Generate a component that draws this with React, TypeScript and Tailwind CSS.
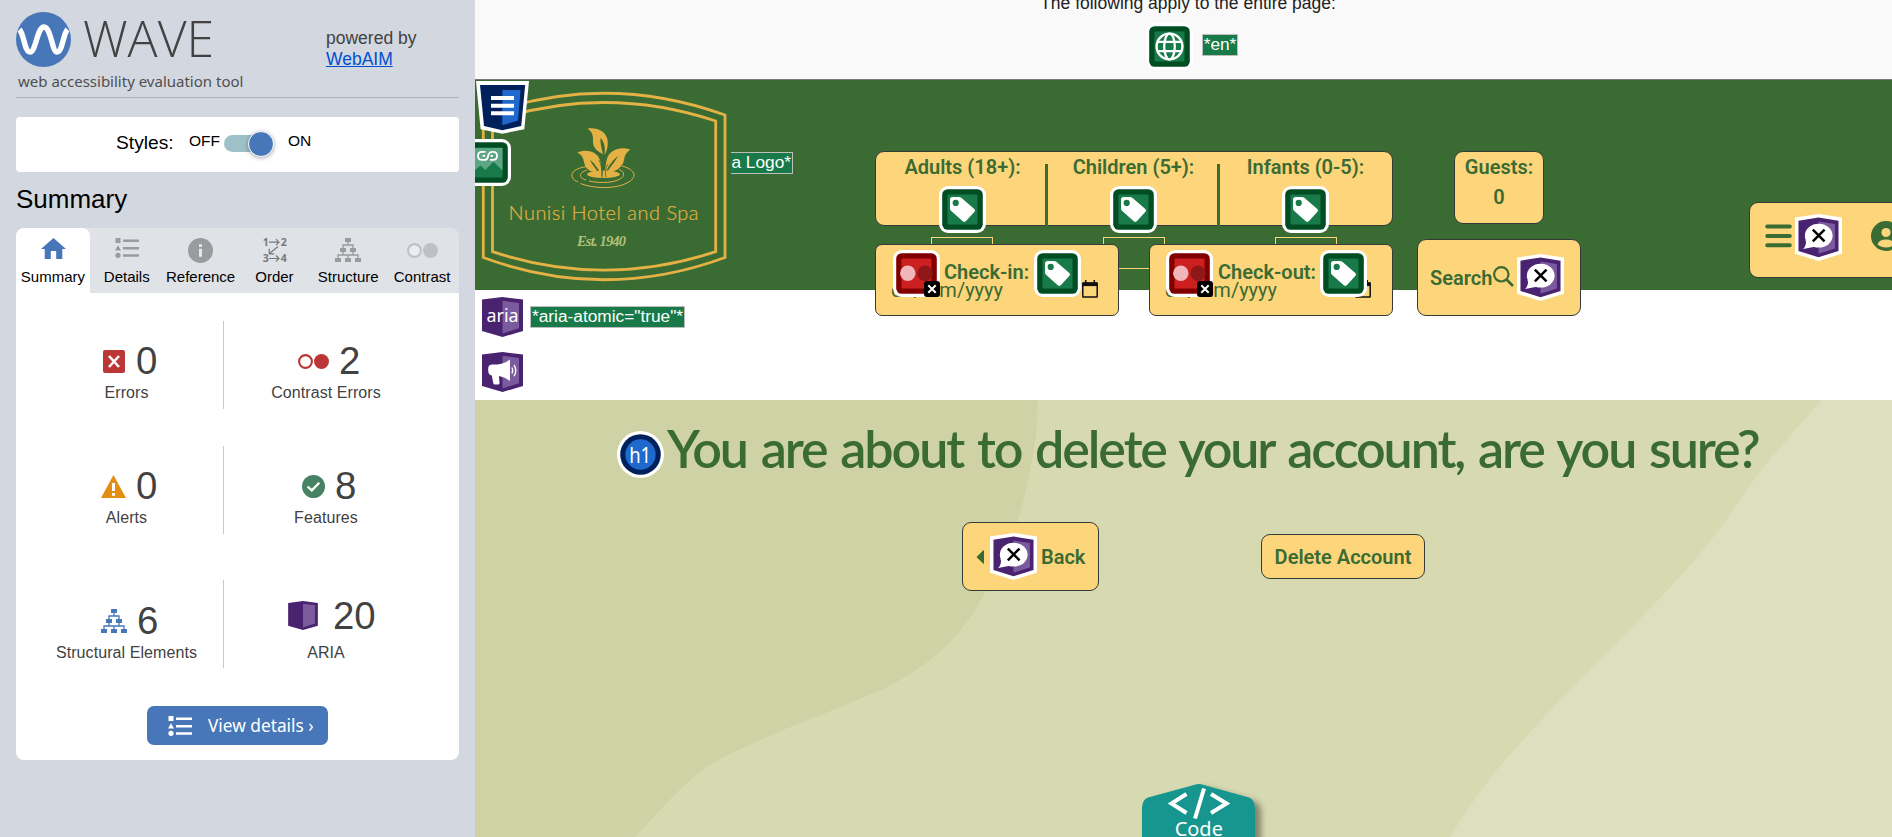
import React from "react";

type Pt = [number, number];

/* Smooth path through a list of points (Catmull-Rom to Bezier). */
function smooth(points: Pt[]): string {
  let d = `M${points[0][0]} ${points[0][1]}`;
  for (let i = 0; i < points.length - 1; i++) {
    const p0 = points[Math.max(i - 1, 0)];
    const p1 = points[i];
    const p2 = points[i + 1];
    const p3 = points[Math.min(i + 2, points.length - 1)];
    d += ` C${p1[0] + (p2[0] - p0[0]) / 6} ${p1[1] + (p2[1] - p0[1]) / 6} ${p2[0] - (p3[0] - p1[0]) / 6} ${
      p2[1] - (p3[1] - p1[1]) / 6
    } ${p2[0]} ${p2[1]}`;
  }
  return d;
}

/* ---------- badges that the evaluation tool injects ---------- */

function GreenTile({ children }: { children: React.ReactNode }) {
  return (
    <svg className="block h-[47px] w-[47px] shrink-0" viewBox="0 0 47 47">
      <rect width="47" height="47" rx="9" fill="#fff" />
      <rect x="3.2" y="3.2" width="40.6" height="40.6" rx="5.5" fill="#004d24" />
      <rect x="8.5" y="8.5" width="30" height="30" rx="1" fill="#177a48" />
      {children}
    </svg>
  );
}

function TagBadge() {
  return (
    <GreenTile>
      <path
        d="M11 13.6Q11 11 13.6 11H19.5Q21.3 11 22.6 12L35.3 22.9Q36.8 24.3 35.5 25.8L27 35.1Q25.4 36.6 23.8 35.3L12 24.8Q11 23.8 11 22.4Z"
        fill="#fff"
      />
      <circle cx="16.7" cy="16.9" r="3.1" fill="#177a48" />
    </GreenTile>
  );
}

function GlobeBadge() {
  return (
    <GreenTile>
      <g fill="none" stroke="#fff" strokeWidth="2.3">
        <circle cx="23.5" cy="23.5" r="12.9" strokeWidth="2.4" />
        <ellipse cx="23.5" cy="23.5" rx="5.3" ry="12.9" />
        <path d="M11 18.8H36M11 28.2H36" />
      </g>
    </GreenTile>
  );
}

function ContrastBadge() {
  return (
    <svg className="block h-[47px] w-[47px] shrink-0" viewBox="0 0 47 47">
      <rect width="47" height="47" rx="9" fill="#fff" />
      <rect x="3.2" y="3.2" width="40.6" height="40.6" rx="5.5" fill="#800000" />
      <rect x="8.5" y="8.5" width="30" height="30" rx="1" fill="#cc2020" />
      <circle cx="14.8" cy="23.3" r="7.7" fill="#f1b6b9" />
      <circle cx="32" cy="23.3" r="7.7" fill="#8f1717" />
      <rect x="31" y="31" width="16" height="16" rx="3" fill="#000" />
      <path d="M35.3 35.3L42.7 42.7M42.7 35.3L35.3 42.7" stroke="#fff" strokeWidth="2" />
    </svg>
  );
}

function LabelBadge() {
  return (
    <svg className="block h-[47px] w-[47px] shrink-0" viewBox="0 0 47.4 47.4">
      <path d="M0 3.5L23.7 0L47.4 3.5V40L23.7 47.4L0 40Z" fill="#fff" />
      <path d="M3.5 6.7L23.7 3.6L43.9 6.7V37.3L23.7 43.6L3.5 37.3Z" fill="#49236f" />
      <path d="M23.7 7.6L40.2 10V34.8L23.7 40Z" fill="#7b5a9d" />
      <ellipse cx="23.9" cy="21.9" rx="14" ry="12" fill="#fff" />
      <path d="M10.5 26Q12.5 30.5 8.2 35.4L20 33Z" fill="#fff" />
      <path d="M18 15.7L29.8 27.5M29.8 15.7L18 27.5" stroke="#000" strokeWidth="2.5" />
    </svg>
  );
}

function AriaShape({ children, className }: { children?: React.ReactNode; className: string }) {
  return (
    <svg className={className} viewBox="0 0 41 40">
      <path d="M0 2.6L20.5 0L41 2.6V34L20.5 40L0 34Z" fill="#49236f" />
      <path d="M20.5 3.8L37 6V31.2L20.5 36.4Z" fill="#7b5a9d" />
      {children}
    </svg>
  );
}

function HeaderBadge() {
  return (
    <svg className="block h-[53px] w-[53px]" viewBox="0 0 53 53">
      <path d="M0 0H53L48.3 48.3L26.3 52.7L4.6 48.3Z" fill="#fff" />
      <path d="M4 4H49.2L45.2 45L26.3 49.2L8 45Z" fill="#00205b" />
      <path d="M26.3 9H44.5L42 39.6L26.3 44.2Z" fill="#1f69cc" />
      <path d="M15 17H38M15 24.7H38M15 32.3H38" stroke="#fff" strokeWidth="4" />
    </svg>
  );
}

function LinkedImageBadge() {
  return (
    <svg className="block h-[47px] w-[36px]" viewBox="11 0 36 47">
      <rect width="47" height="47" rx="9" fill="#fff" />
      <rect x="3.2" y="3.2" width="40.6" height="40.6" rx="5.5" fill="#004d24" />
      <rect x="8.5" y="8.5" width="30" height="30" rx="1" fill="#177a48" />
      <path d="M9 9H38.5V31.5L29.5 22.7L21.3 31L16.5 26.5L9 32.5Z" fill="#5ea583" />
      <g fill="none" stroke="#fff" strokeWidth="1.8">
        <path d="M21.5 12.8H18Q14 12.8 14 16.8Q14 20.9 18 20.9H20Q23.5 20.9 24 17.500Q24.500 12.800 28.500 12.800" />
        <path d="M28.500 12.800H29.200Q33 12.800 33 16.800Q33 20.900 29.200 20.900H26M18.500 16.800H21.200M26.500 16.800H29" />
      </g>
    </svg>
  );
}

function Note({ children }: { children: React.ReactNode }) {
  return (
    <span className="block h-[22px] border border-[#bdbdbd] bg-[#177a48] px-px font-['Liberation_Sans',sans-serif] text-[17.3px] leading-[18px] whitespace-nowrap text-white">
      {children}
    </span>
  );
}

/* ---------- small icons of the sidebar ---------- */

function ListIcon({ className }: { className: string }) {
  return (
    <svg className={className} viewBox="0 0 24 20" fill="currentColor">
      <rect x="0.5" y="0" width="5" height="5" />
      <path d="M3 7.3L6 12.6H0Z" />
      <circle cx="3" cy="17.3" r="2.6" />
      <path d="M8 1.4H24V4H8ZM8 8.9H24V11.5H8ZM8 16.2H24V18.8H8Z" />
    </svg>
  );
}

function TreeIcon({ className }: { className: string }) {
  return (
    <svg className={className} viewBox="0 0 26 24" fill="currentColor">
      <path d="M10 0H16V4H10ZM5 10H11V14H5ZM15 10H21V14H15ZM0 20H6V24H0ZM10 20H16V24H10ZM20 20H26V24H20Z" />
      <path
        d="M13 4V7M8 10V7H18V10M8 14V17M18 14V17M3 20V17H23V20M13 17V20"
        fill="none"
        stroke="currentColor"
        strokeWidth="1.3"
      />
    </svg>
  );
}

function DotsIcon({ className }: { className: string }) {
  return (
    <svg className={className} viewBox="0 0 31 15">
      <circle cx="7.5" cy="7.5" r="6.4" fill="#fff" fillOpacity="0.4" stroke="currentColor" strokeWidth="2.1" />
      <circle cx="23.5" cy="7.5" r="7.5" fill="currentColor" />
    </svg>
  );
}

const tabs = [
  {
    name: "Summary",
    icon: (
      <svg className="mt-px ml-[1px] h-[21px] w-[25px] text-[#4777b8]" viewBox="0 0 25 21" fill="currentColor">
        <path d="M12.5 0L25 11H21.3V21H15.2V13.5Q15.2 13 14.7 13H10.3Q9.8 13 9.8 13.5V21H3.7V11H0Z" />
      </svg>
    ),
  },
  { name: "Details", icon: <ListIcon className="h-5 w-6 text-[#999b9d]" /> },
  {
    name: "Reference",
    icon: (
      <svg className="h-[25px] w-[25px]" viewBox="0 0 25 25">
        <circle cx="12.5" cy="12.5" r="12.5" fill="#999b9d" />
        <path d="M11 6.2H14V9H11ZM11 10.8H14V18.8H11Z" fill="#e6e8eb" />
      </svg>
    ),
  },
  {
    name: "Order",
    icon: (
      <svg className="ml-[2px] h-[26px] w-6 text-[#77797b]" viewBox="0 0 24 26">
        <g fontFamily="Open Sans, sans-serif" fontSize="10.5" fontWeight="700" fill="currentColor">
          <text x="-0.3" y="8">1</text>
          <text x="17.8" y="8">2</text>
          <text x="-0.3" y="24.3">3</text>
          <text x="17.8" y="24.3">4</text>
        </g>
        <path
          d="M6 4.2H16M13 1.2L16 4.2L13 7.2M6 20.5H16M13 17.5L16 20.5L13 23.5M15 8.5L6.5 15.5M6.3 10.8V15.8H11.2"
          fill="none"
          stroke="currentColor"
          strokeWidth="1.2"
        />
      </svg>
    ),
  },
  { name: "Structure", icon: <TreeIcon className="h-6 w-[26px] text-[#999b9d]" /> },
  { name: "Contrast", icon: <DotsIcon className="mt-[5px] h-[15px] w-[31px] text-[#bdc0c4]" /> },
];

const stats = [
  {
    label: "Errors",
    value: "0",
    row: "gap-[11px] pl-[87px]",
    icon: (
      <svg className="mt-px h-[23px] w-[22px]" viewBox="0 0 22 23">
        <rect width="22" height="23" rx="2" fill="#bb3636" />
        <path d="M6 6L16 17M16 6L6 17" stroke="#fff" strokeWidth="2.6" />
      </svg>
    ),
  },
  {
    label: "Contrast Errors",
    value: "2",
    row: "gap-[10px] pl-[74px]",
    icon: <DotsIcon className="mt-[2px] h-[15px] w-[31px] text-[#bb3636]" />,
  },
  {
    label: "Alerts",
    value: "0",
    row: "gap-[10px] pl-[85px]",
    icon: (
      <svg className="mt-[2px] h-[23px] w-[25px]" viewBox="0 0 25 23">
        <path d="M12.5 0L25 23H0Z" fill="#e38d13" />
        <path d="M11 8H14V16H11ZM11 18H14V20.8H11Z" fill="#fff" />
      </svg>
    ),
  },
  {
    label: "Features",
    value: "8",
    row: "gap-[10px] pl-[78px]",
    icon: (
      <svg className="mt-[2px] h-[23px] w-[23px]" viewBox="0 0 23 23">
        <circle cx="11.5" cy="11.5" r="11.5" fill="#478264" />
        <path d="M5.5 11.5L9.8 15.4L17.3 7.8" fill="none" stroke="#fff" strokeWidth="2.3" />
      </svg>
    ),
  },
  {
    label: "Structural Elements",
    value: "6",
    row: "gap-[10px] pl-[85px]",
    icon: <TreeIcon className="mt-px h-6 w-[26px] text-[#4777b8]" />,
  },
  {
    label: "ARIA",
    value: "20",
    row: "-mt-[5px] mb-[5px] gap-[15px] pl-[64px]",
    icon: <AriaShape className="h-[29px] w-[30px]" />,
  },
];

function Sidebar() {
  return (
    <aside className="h-[837px] w-[475px] shrink-0 bg-[#d3d7df] px-4 font-['Liberation_Sans',sans-serif] text-black">
      <header className="flex h-[98px] border-b border-[#b1b5b5] text-[#424242]">
        <div className="w-[310px] pt-3">
          <div className="flex h-[55px] gap-[12px]">
            <svg className="h-[55px] w-[55px]" viewBox="0 0 55 55">
              <circle cx="27.5" cy="27.5" r="27.5" fill="#4777b8" />
              <path
                d="M3.5 17.5C8 22 8.5 40 14 40C20 40 21 15 28 15C35 15 36 40 41 40C46.500 40 47 22 51.500 17.500"
                fill="none"
                stroke="#fff"
                strokeWidth="5.4"
              />
            </svg>
            <span className="font-['Open_Sans',sans-serif] text-[50px] leading-[53px] font-light">WAVE</span>
          </div>
          <div className="mt-[4px] pl-[2px] font-['Noto_Sans',sans-serif] text-[15px] leading-5 text-[#4f4f4f]">
            web accessibility evaluation tool
          </div>
        </div>
        <div className="pt-[28px] text-[17.5px] leading-[21px]">
          powered by
          <br />
          <a className="text-[#0050d0] underline">WebAIM</a>
        </div>
      </header>

      <div className="mt-[19px] flex h-[55px] rounded-[4px] bg-white pl-[100px]">
        <span className="w-[73px] pt-[14px] text-[19.2px] leading-6">Styles:</span>
        <span className="w-[35px] pt-[12px] text-[15.5px] leading-6">OFF</span>
        <span className="relative mt-[18px] h-[17px] w-[48px] rounded-full bg-[#9dc0c9]">
          <span className="absolute -top-[4px] right-[-2px] h-[26px] w-[26px] rounded-full border border-white bg-[#4777b8] shadow-[0_1px_4px_rgba(0,0,0,0.35)]" />
        </span>
        <span className="ml-[16px] pt-[12px] text-[15.5px] leading-6">ON</span>
      </div>

      <h2 className="h-[56px] pt-[12px] text-[26px] leading-[30px]">Summary</h2>

      <nav className="grid h-[65px] grid-cols-6 rounded-t-[8px] bg-[#dfe2e7] text-center text-[15px]">
        {tabs.map((tab, i) => (
          <div
            key={tab.name}
            className={
              i === 0
                ? "flex flex-col items-center rounded-t-[8px] bg-white pt-[9px]"
                : "flex flex-col items-center pt-[10px]"
            }
          >
            <span className="flex h-[27px] items-start">{tab.icon}</span>
            <span className={i === 0 ? "mt-[3px] leading-5" : "mt-[2px] leading-5"}>{tab.name}</span>
          </div>
        ))}
      </nav>

      <section className="h-[467px] rounded-b-[8px] bg-white pt-[28px] text-[#424242]">
        <div className="grid grid-cols-[208px_235px] gap-y-[37px]">
          {stats.map((s, i) => (
            <div
              key={s.label}
              className={
                (i % 2 === 0 ? "border-r border-[#c9c9c9] " : "") +
                (i > 3 ? "mt-[9px] h-[88px] pt-[20px]" : "h-[88px] pt-[19px]")
              }
            >
              <div className={"flex h-[41px] items-center " + s.row}>
                {s.icon}
                <span className="text-[38.4px] leading-[41px]">{s.value}</span>
              </div>
              <div
                className={
                  i % 2 === 0
                    ? "w-[221px] text-center text-[16px] leading-6 tracking-[0.08px]"
                    : "w-[204px] text-center text-[16px] leading-6 tracking-[0.08px]"
                }
              >
                {s.label}
              </div>
            </div>
          ))}
        </div>
        <button className="mx-auto mt-[38px] flex h-[39px] w-[181px] items-center rounded-[7px] bg-[#4777b8] pl-[21px] text-white">
          <ListIcon className="h-5 w-6" />
          <span className="ml-[16px] font-['Noto_Sans',sans-serif] text-[17.3px] whitespace-nowrap">View details ›</span>
        </button>
      </section>
    </aside>
  );
}

/* ---------- evaluated hotel page ---------- */

function HotelLogo() {
  return (
    <svg className="block h-[210px] w-[256px]" viewBox="0 0 256 210" fill="none">
      <g stroke="#e3b144" strokeWidth="2.8">
        <path d="M8.3 35Q129 -8.500 250 35V177.500Q129 222 8.300 177.500Z" />
        <path d="M17.500 41Q129 4 240.700 41V171.700Q129 208.500 17.500 171.700Z" />
      </g>
      <g fill="#e3b144">
        <path d="M112.500 48.600C122 47 131 51 132.600 60C133 66 132.500 70 129.500 75C131 66 128 60 125.500 58C125 64 127 69 128 74C119 70 117.500 65 118 59C118 54 116 51 112.500 48.600Z" />
        <path d="M102.300 72.500C111 69 121 71 124.500 79C127 85 126 90 126 94C123 88 119 83 115 80C117 85 121 88 123 93C113 92 110 87 109 82C108 77 106 74 102.300 72.500Z" />
        <path d="M155.300 69.500C144 66 134 71 132 79C130.500 84 130 89 130.500 93C133 86 138 80 143 76C140 82 134 88 132 93C142 92 148 86 149 80C149.500 75 152 72 155.300 69.500Z" />
        <ellipse cx="128.500" cy="94.300" rx="16.500" ry="3.700" />
      </g>
      <path
        d="M128 74C127 82 128 88 127 98M124 80C127 86 127 92 126.500 96M133 84C130 89 130 93 131 97"
        stroke="#3a6b33"
        strokeWidth="0.8"
      />
      <g stroke="#e3b144" strokeWidth="1">
        <path d="M112 86.500C101 88 96 92 97 96.500C98 100 101 101 103 102" />
        <path d="M105.500 103.500C119 109 141 109 152 103C162 98 162 90 147 86" />
        <path d="M112 90C103 93 104 98 111 100M114 101C128 104 140 102 145 99C150 96 150 92 144 89.500" />
      </g>
      <text x="33.500" y="140" fill="#e3b144" fontFamily="Lato, sans-serif" fontWeight="300" fontSize="20" textLength="190" stroke="#e3b144" strokeWidth="0.200">
        Nunisi Hotel and Spa
      </text>
      <text
        x="102"
        y="166"
        fill="#b3bf77"
        fontFamily="Liberation Serif, serif"
        fontStyle="italic"
        fontSize="14.500"
        textLength="49"
      >
        Est. 1940
      </text>
    </svg>
  );
}

function DateField({ label, out }: { label: string; out?: boolean }) {
  return (
    <div
      className={
        "relative h-[72px] rounded-[7px] border border-[#333b38] bg-[#fdd57b] text-[20px] leading-6 text-[#3a6b33] " +
        (out ? "px-4" : "px-[17px]")
      }
    >
      <div className="relative z-10 flex pt-[5px]">
        <ContrastBadge />
        <span className={out ? "ml-[5px] w-[102px] pt-[10px] font-semibold" : "ml-[4px] w-[90px] pt-[10px] font-semibold"}>
          {label}
        </span>
        <TagBadge />
      </div>
      <div className="-mt-[19px] flex w-[205px] justify-between">
        <span className={out ? "-ml-[1px]" : "-ml-[2px]"}>dd/mm/yyyy</span>
        <svg className="mt-[2px] h-[18px] w-[16px]" viewBox="0 0 16 18" fill="none" stroke="#111">
          <rect x="0.800" y="3" width="14.400" height="14" rx="0.500" strokeWidth="1.500" />
          <path d="M0.500 4.300H15.500" strokeWidth="3.600" />
          <path d="M3.700 0V4M12.300 0V4" strokeWidth="1.500" />
        </svg>
      </div>
    </div>
  );
}

function SiteHeader() {
  return (
    <header className="relative z-10 flex h-[210px] w-[1500px] bg-[#3a6b33] font-[Roboto,sans-serif] text-[20px] leading-6 font-semibold text-[#3a6b33]">
      <HotelLogo />
      <div className="absolute top-px left-px">
        <HeaderBadge />
      </div>
      <div className="absolute top-[59px] left-0">
        <LinkedImageBadge />
      </div>
      <div className="mt-[72px] flex h-[22px] w-[62px] justify-end overflow-hidden font-normal">
        <Note>Spa Logo*</Note>
      </div>

      <div className="relative ml-[82px] w-[518px] pt-[71px]">
        <div className="grid h-[75px] grid-cols-3 rounded-[9px] border border-[#333b38] bg-[#fdd57b] text-center">
          {["Adults (18+):", "Children (5+):", "Infants (0-5):"].map((name, i) => (
            <div
              key={name}
              className={
                "relative pt-[3px] [&+div]:before:absolute [&+div]:before:top-[12px] [&+div]:before:-left-[3px] [&+div]:before:h-[62px] [&+div]:before:w-[3px] [&+div]:before:bg-[#3a6b33] " +
                (i === 0 ? "pl-px" : "pr-px")
              }
            >
              {name}
              <div className="mt-[7px] flex justify-center">
                <TagBadge />
              </div>
              <div className="absolute top-[85px] left-[55px] h-3 w-[62px] border border-b-0 border-[#fdd57b]" />
            </div>
          ))}
        </div>
        <div className="absolute top-[188px] left-[240px] h-px w-[38px] bg-[#fdd57b]" />
        <div className="relative mt-[18px] grid grid-cols-2 gap-x-[30px] font-normal">
          <DateField label="Check-in:" />
          <DateField label="Check-out:" out />
        </div>
      </div>

      <div className="ml-6 flex w-[164px] flex-col items-center pt-[71px]">
        <div className="h-[73px] w-[90px] shrink-0 rounded-[9px] border border-[#333b38] bg-[#fdd57b] pt-[3px] text-center">
          Guests:
          <div className="mt-[6px]">0</div>
        </div>
        <div className="mt-[15px] flex h-[77px] w-[164px] shrink-0 items-start rounded-[9px] border border-[#333b38] bg-[#fdd57b] pt-[14px] pl-[12px]">
          <span className="w-[63px] pt-[12px]">Search</span>
          <svg className="mt-[12px] h-[21px] w-[21px]" viewBox="0 0 21 21" fill="none" stroke="#3a6b33" strokeWidth="2.200">
            <circle cx="8.300" cy="8.300" r="7.200" />
            <path d="M13.500 13.500L20 20" strokeWidth="2.600" />
          </svg>
          <span className="ml-[3px]">
            <LabelBadge />
          </span>
        </div>
      </div>

      <div className="mt-[122px] ml-[168px] flex h-[76px] w-[190px] rounded-[9px] border border-[#333b38] bg-[#fdd57b]">
        <svg className="mt-[21px] ml-[15px] h-[24px] w-[27px]" viewBox="0 0 27 24" stroke="#3a6b33" strokeWidth="4" strokeLinecap="round">
          <path d="M2.200 2.500H24.800M2.200 12H24.800M2.200 21.300H24.800" />
        </svg>
        <span className="mt-[11px] ml-[3px]">
          <LabelBadge />
        </span>
        <svg className="mt-[18px] ml-[29px] h-[30px] w-[30px]" viewBox="0 0 30 30">
          <circle cx="15" cy="15" r="15" fill="#3a6b33" />
          <circle cx="15" cy="11.500" r="4.600" fill="#fdd57b" />
          <path d="M6.500 23.500Q8 18.500 15 18.500Q22 18.500 23.500 23.500Q20 26.500 15 26.500Q10 26.500 6.500 23.500Z" fill="#fdd57b" />
        </svg>
      </div>
    </header>
  );
}

const leftWave = smooth([
  [562.5, -20], [562.5, 0], [559.5, 45], [542, 123], [510, 193], [475, 242], [425, 280], [358, 310], [292, 337], [225, 372], [160, 437], [140, 460],
]);
const rightWave = smooth([
  [1358, -20], [1346, 0], [1285, 72], [1240, 135], [1186, 197], [1073, 313], [1014, 380], [975, 437], [962, 460],
]);

function DeletePage() {
  return (
    <section className="relative h-[437px] overflow-hidden bg-[#d7d9b1] font-[Roboto,sans-serif] text-[#3a6b33]">
      <svg className="absolute inset-0 h-[437px] w-[1417px]" viewBox="0 0 1417 437">
        <path d={leftWave + " H-10V-20Z"} fill="#cfd2a4" />
        <path d={rightWave + " H1430V-20Z"} fill="#dce0be" />
      </svg>
      <div className="relative">
        <div className="flex pt-[20px] pl-[142px]">
          <svg className="mt-[11px] h-[47px] w-[47px] shrink-0" viewBox="0 0 47 47">
            <circle cx="23.500" cy="23.500" r="23.500" fill="#fff" />
            <circle cx="23.500" cy="23.500" r="20.300" fill="#00205b" />
            <circle cx="23.500" cy="23.500" r="15.200" fill="#1f69cc" />
            <text x="12.200" y="32" fill="#fff" fontFamily="Noto Sans, sans-serif" fontSize="22.500" textLength="22" lengthAdjust="spacingAndGlyphs">
              h1
            </text>
          </svg>
          <h1 className="ml-[3px] font-[Lato,sans-serif] text-[52px] leading-[56px] font-semibold tracking-[-2.1px] [word-spacing:3px] whitespace-nowrap">
            You are about to delete your account, are you sure?
          </h1>
        </div>
        <div className="mt-[44px] flex items-center pl-[487px] text-[20px] leading-6 font-semibold">
          <button className="flex h-[69px] w-[137px] items-center rounded-[9px] border border-[#333b38] bg-[#fdd57b] pl-[13px]">
            <svg className="h-[14px] w-[8px]" viewBox="0 0 8 14">
              <path d="M0.500 7L7 0.500Q8 0 8 1V13Q8 14 7 13.500Z" fill="#3a6b33" />
            </svg>
            <span className="-mt-px ml-[6px]">
              <LabelBadge />
            </span>
            <span className="ml-[4px]">Back</span>
          </button>
          <button className="ml-[162px] h-[45px] w-[164px] rounded-[9px] border border-[#333b38] bg-[#fdd57b]">
            Delete Account
          </button>
        </div>
      </div>
      <div className="absolute top-[382px] left-[665px]">
        <svg className="block h-[60px] w-[130px]" viewBox="0 0 130 60">
          <defs>
            <filter id="panelShadow" x="-20%" y="-20%" width="140%" height="140%">
              <feDropShadow dx="6" dy="4" stdDeviation="3" floodColor="#000" floodOpacity="0.4" />
            </filter>
          </defs>
          <path
            d="M2 70V26Q2 18 8 15.500L54 3Q59 1 64 3L109 15.500Q115 18 115 26V70Z"
            fill="#18968f"
            filter="url(#panelShadow)"
          />
          <path
            d="M46.500 12L31.500 21.500L46.500 31M71 12L86.500 21.500L71 31M64 6.500L55 36.500"
            fill="none"
            stroke="#fff"
            strokeWidth="4"
          />
          <text x="58.800" y="53.500" fill="#fff" fontFamily="Noto Sans, sans-serif" fontSize="20" textAnchor="middle">
            Code
          </text>
        </svg>
      </div>
    </section>
  );
}

export default function App() {
  return (
    <div className="flex h-[837px] w-[1892px] overflow-hidden bg-white">
      <Sidebar />
      <main className="h-[837px] w-[1417px] overflow-hidden">
        <div className="flex h-[80px] flex-col items-center overflow-hidden border-b border-[#777] bg-[#f9f9f9] pl-[9px] font-['Liberation_Sans',sans-serif] text-[#222]">
          <p className="-mt-[7px] h-[30px] text-[17.5px] leading-[20px]">The following apply to the entire page:</p>
          <div className="ml-[8px] flex gap-[9px]">
            <GlobeBadge />
            <div className="pt-[11px]">
              <Note>*en*</Note>
            </div>
          </div>
        </div>
        <SiteHeader />
        <div className="h-[110px] bg-white pt-[7px] pl-[7px]">
          <div className="flex">
            <AriaShape className="h-[40px] w-[41px]">
              <text x="4.500" y="25" fill="#fff" fontFamily="Noto Sans, sans-serif" fontSize="18" textLength="32" lengthAdjust="spacingAndGlyphs">
                aria
              </text>
            </AriaShape>
            <div className="mt-[9px] ml-[7px]">
              <Note>*aria-atomic="true"*</Note>
            </div>
          </div>
          <AriaShape className="mt-[15px] h-[40px] w-[41px]">
            <path
              d="M6.500 14.500Q7.500 12.500 10 12.500H15Q22 12 28 7.500V29Q23 25 17 24L17.500 31Q17.500 32.500 16 32.500H13Q11.500 32.500 11.200 31L9.800 23.500Q6.500 23 6.200 19Q6 16 6.500 14.500Z"
              fill="#fff"
            />
            <path d="M30 15.500Q31.500 18.500 30 21.500M32 12.800Q35.500 18.500 32 24.200" fill="none" stroke="#fff" strokeWidth="1.300" />
          </AriaShape>
        </div>
        <DeletePage />
      </main>
    </div>
  );
}
